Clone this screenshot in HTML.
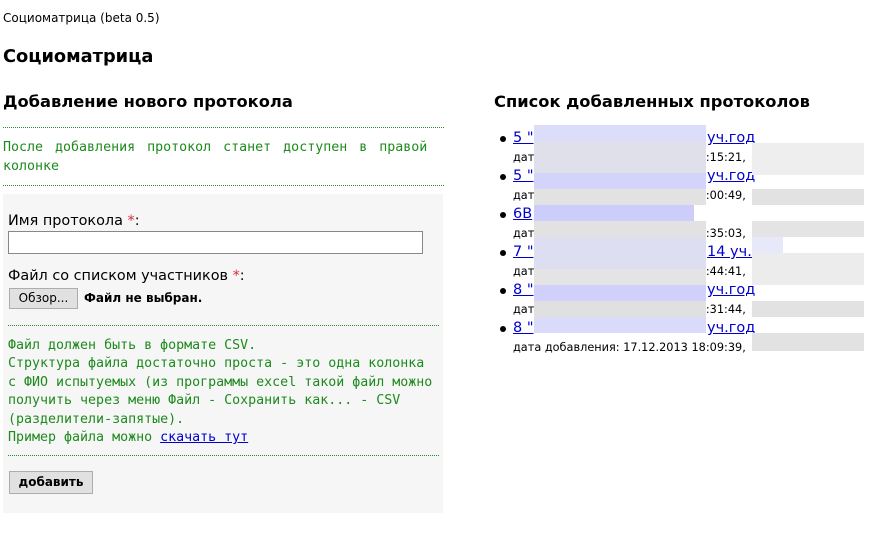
<!DOCTYPE html>
<html><head><meta charset="utf-8"><style>
body{margin:0;width:892px;height:536px;background:#fff;position:relative;font-family:"DejaVu Sans",Verdana,sans-serif;overflow:hidden}
.a{position:absolute;white-space:nowrap}
.m{font-family:"DejaVu Sans Mono",monospace;font-size:13.3px;color:#1e8a1e}
.dot{position:absolute;height:0;border-top:1px dotted #2a8a2a}
.btn{position:absolute;background:#e1e1e1;border:1px solid #adadad;box-sizing:border-box;font-size:12px;color:#000;text-align:center}
.li{position:absolute;left:513px;font-size:14.5px;color:#0000cc;text-decoration:underline}
.bul{position:absolute;left:500px;width:6px;height:6px;border-radius:50%;background:#000}
.dt{position:absolute;left:513px;font-size:11.3px;color:#000}
.px{position:absolute}
</style></head><body>
<div class="a" style="left:3px;top:11px;font-size:12px">Социоматрица (beta 0.5)</div>
<div class="a" style="left:3px;top:46px;font-size:17.8px;font-weight:bold">Социоматрица</div>
<div class="a" style="left:3px;top:92px;font-size:16.3px;font-weight:bold">Добавление нового протокола</div>
<div class="dot" style="left:3px;top:127px;width:441px"></div>
<div class="a m" style="left:3px;top:140px;word-spacing:4px">После добавления протокол станет доступен в правой</div>
<div class="a m" style="left:3px;top:159px">колонке</div>
<div class="dot" style="left:3px;top:185px;width:441px"></div>
<div style="position:absolute;left:3px;top:194px;width:440px;height:319px;background:#f6f6f6"></div>
<div class="a" style="left:8px;top:213px;font-size:14.4px">Имя протокола <span style="color:#e0283a">*</span>:</div>
<div style="position:absolute;left:8px;top:231px;width:415px;height:23px;border:1px solid #888;box-sizing:border-box;background:#fff"></div>
<div class="a" style="left:8px;top:268px;font-size:14.4px">Файл со списком участников <span style="color:#e0283a">*</span>:</div>
<div class="btn" style="left:9px;top:288px;width:69px;height:21px;line-height:19px">Обзор...</div>
<div class="a" style="left:84px;top:291px;font-size:12px;font-weight:bold">Файл не выбран.</div>
<div class="dot" style="left:8px;top:325px;width:431px"></div>
<div class="a m" style="left:8px;top:337px;line-height:18.4px">Файл должен быть в формате CSV.<br>Структура файла достаточно проста - это одна колонка<br>с ФИО испытуемых (из программы excel такой файл можно<br>получить через меню Файл - Сохранить как... - CSV<br>(разделители-запятые).<br>Пример файла можно <a href="#" style="color:#0000cc">скачать тут</a></div>
<div class="dot" style="left:8px;top:455px;width:431px"></div>
<div class="btn" style="left:9px;top:471px;width:84px;height:23px;line-height:21px;font-weight:bold">добавить</div>

<div class="a" style="left:494px;top:92px;font-size:16.3px;font-weight:bold">Список добавленных протоколов</div>

<div class="bul" style="top:136px"></div><div class="li a" style="top:130px">5 "</div><div class="li a" style="top:130px;left:707px">уч.год</div>
<div class="dt a" style="top:151px">дата добавления: 17.12.2013 18:15:21,</div>
<div class="bul" style="top:174px"></div><div class="li a" style="top:168px">5 "</div><div class="li a" style="top:168px;left:707px">уч.год</div>
<div class="dt a" style="top:189px">дата добавления: 17.12.2013 18:00:49,</div>
<div class="bul" style="top:212px"></div><div class="li a" style="top:206px">6В</div>
<div class="dt a" style="top:227px">дата добавления: 17.12.2013 18:35:03,</div>
<div class="bul" style="top:250px"></div><div class="li a" style="top:244px">7 "</div><div class="li a" style="top:244px;left:707px">14 уч.г</div>
<div class="dt a" style="top:265px">дата добавления: 17.12.2013 18:44:41,</div>
<div class="bul" style="top:288px"></div><div class="li a" style="top:282px">8 "</div><div class="li a" style="top:282px;left:707px">уч.год</div>
<div class="dt a" style="top:303px">дата добавления: 17.12.2013 18:31:44,</div>
<div class="bul" style="top:326px"></div><div class="li a" style="top:320px">8 "</div><div class="li a" style="top:320px;left:707px">уч.год</div>
<div class="dt a" style="top:341px">дата добавления: 17.12.2013 18:09:39,</div>

<div class="px" style="left:534px;top:125px;width:172px;height:16px;background:#dcdcfb"></div>
<div class="px" style="left:534px;top:141px;width:172px;height:32px;background:#e0e0ea"></div>
<div class="px" style="left:534px;top:173px;width:172px;height:16px;background:#d4d4fb"></div>
<div class="px" style="left:534px;top:189px;width:172px;height:16px;background:#e2e2e2"></div>
<div class="px" style="left:534px;top:205px;width:160px;height:16px;background:#cdcdfb"></div>
<div class="px" style="left:534px;top:221px;width:172px;height:16px;background:#e2e2e2"></div>
<div class="px" style="left:534px;top:237px;width:172px;height:32px;background:#dedef3"></div>
<div class="px" style="left:534px;top:269px;width:172px;height:16px;background:#e4e4e4"></div>
<div class="px" style="left:534px;top:285px;width:172px;height:16px;background:#d0d0fb"></div>
<div class="px" style="left:534px;top:301px;width:172px;height:16px;background:#e0e0e0"></div>
<div class="px" style="left:534px;top:317px;width:172px;height:16px;background:#dadafb"></div>
<div class="px" style="left:752px;top:237px;width:31px;height:16px;background:#e8e8fb"></div>
<div class="px" style="left:752px;top:143px;width:112px;height:32px;background:#eeeeee"></div>
<div class="px" style="left:752px;top:189px;width:112px;height:16px;background:#e2e2e2"></div>
<div class="px" style="left:752px;top:221px;width:112px;height:16px;background:#e4e4e4"></div>
<div class="px" style="left:752px;top:253px;width:112px;height:32px;background:#ececec"></div>
<div class="px" style="left:752px;top:301px;width:112px;height:16px;background:#e2e2e2"></div>
<div class="px" style="left:752px;top:333px;width:112px;height:18px;background:#e2e2e2"></div>
</body></html>
